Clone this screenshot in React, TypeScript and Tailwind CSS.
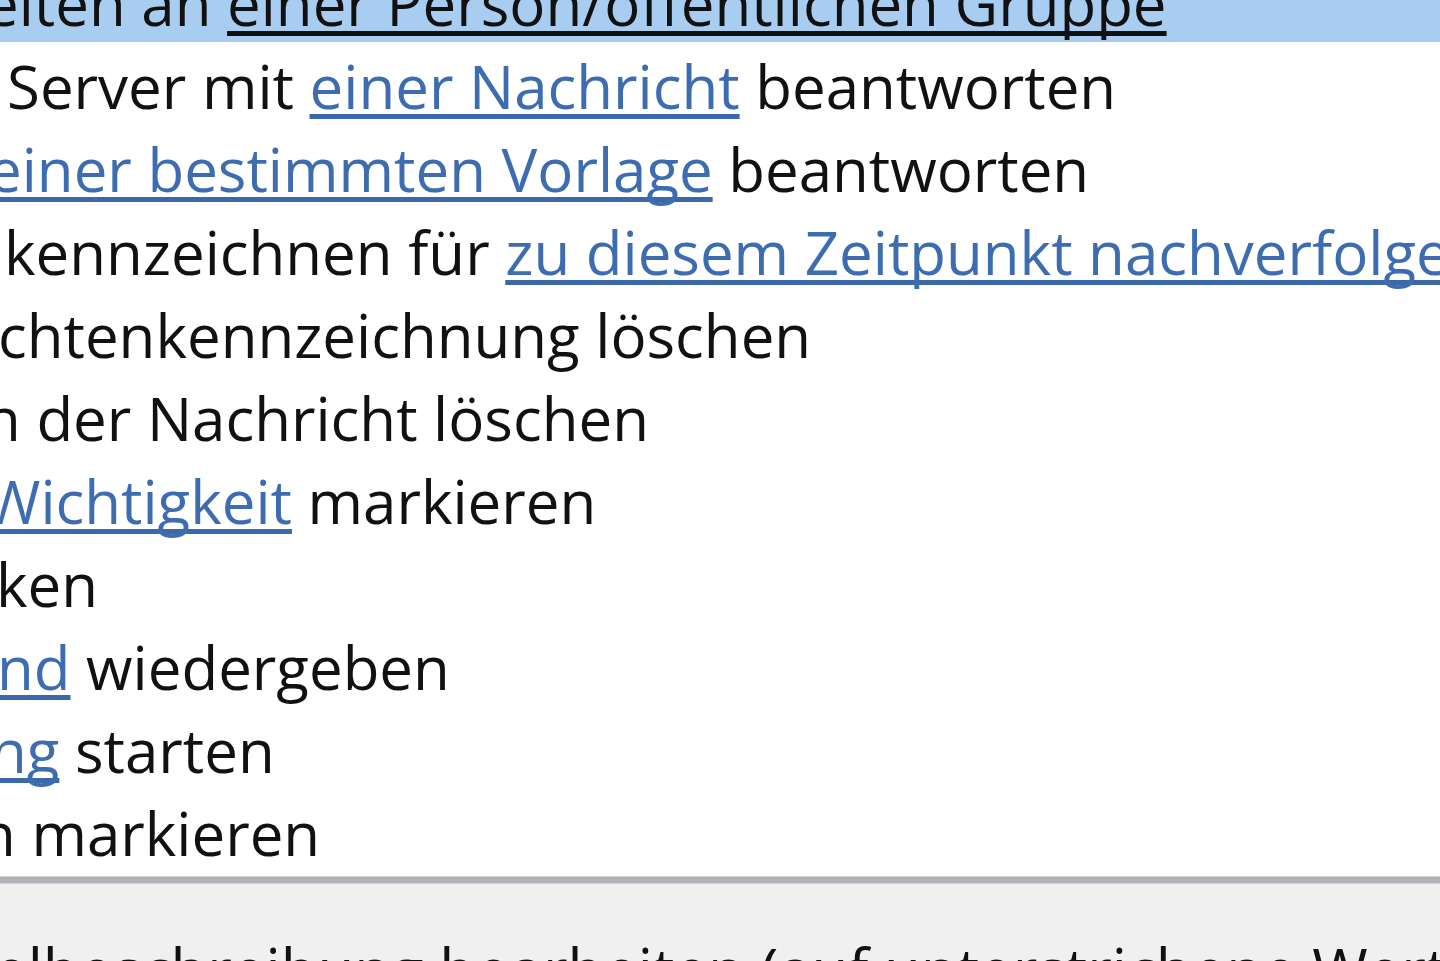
import React from 'react';

type Part = { text: string; link?: boolean };

interface Row {
    offset: string;
    parts: Part[];
    selected?: boolean;
}

const rows: Row[] = [
    {
        offset: '-ml-[15px]',
        selected: true,
        parts: [{ text: 'eiten an ' }, { text: 'einer Person/öffentlichen Gruppe', link: true }],
    },
    {
        offset: 'ml-[7px]',
        parts: [{ text: 'Server mit ' }, { text: 'einer Nachricht', link: true }, { text: ' beantworten' }],
    },
    {
        offset: '-ml-[12px]',
        parts: [{ text: 'einer bestimmten Vorlage', link: true }, { text: ' beantworten' }],
    },
    {
        offset: 'ml-[4px]',
        parts: [{ text: 'kennzeichnen für ' }, { text: 'zu diesem Zeitpunkt nachverfolgen', link: true }],
    },
    { offset: '-ml-[2px]', parts: [{ text: 'chtenkennzeichnung löschen' }] },
    { offset: '-ml-[16px]', parts: [{ text: 'n der Nachricht löschen' }] },
    {
        offset: '-ml-[15px]',
        parts: [{ text: 'Wichtigkeit', link: true }, { text: ' markieren' }],
    },
    { offset: '-ml-[4px]', parts: [{ text: 'ken' }] },
    { offset: '-ml-[3px]', parts: [{ text: 'nd', link: true }, { text: ' wiedergeben' }] },
    { offset: '-ml-[10px]', parts: [{ text: 'ng', link: true }, { text: ' starten' }] },
    { offset: '-ml-[21px]', parts: [{ text: 'n markieren' }] },
];

export default function App() {
    return (
        <div className="h-[961px] w-[1440px] overflow-hidden bg-white font-['Open_Sans','Liberation_Sans',sans-serif] text-[60px] font-medium text-[#111]">
            {/* rule action list, scrolled so the first row is half hidden */}
            <div className="-mt-[41px]">
                {rows.map((row, i) => (
                    <div
                        key={i}
                        className={`h-[83px] whitespace-nowrap leading-[89px] ${row.selected ? 'bg-[#a9cdf0]' : ''}`}
                    >
                        <span className={`inline-block ${row.offset}`}>
                            {row.parts.map((p, j) =>
                                p.link ? (
                                    <span
                                        key={j}
                                        className={`underline decoration-[5px] underline-offset-[5px] [text-decoration-skip-ink:none] ${row.selected ? 'text-[#111] decoration-[#111]' : 'text-[#3d6db0] decoration-[#3a68a8]'}`}
                                    >
                                        {p.text}
                                    </span>
                                ) : (
                                    <span key={j} className="whitespace-pre">{p.text}</span>
                                )
                            )}
                        </span>
                    </div>
                ))}
            </div>

            <div className="mt-[4px] h-[1px] bg-[#d2d3d7]" />
            <div className="h-[6px] bg-[#b1b2b7]" />
            <div className="h-[1px] bg-[#d6d7da]" />

            <div className="h-[200px] bg-[#f0f0f0] pt-[41px]">
                <div className="-ml-[6px] whitespace-nowrap leading-[89px]">
                    elbeschreibung bearbeiten (auf unterstrichene Werte klicken)
                </div>
            </div>
        </div>
    );
}
